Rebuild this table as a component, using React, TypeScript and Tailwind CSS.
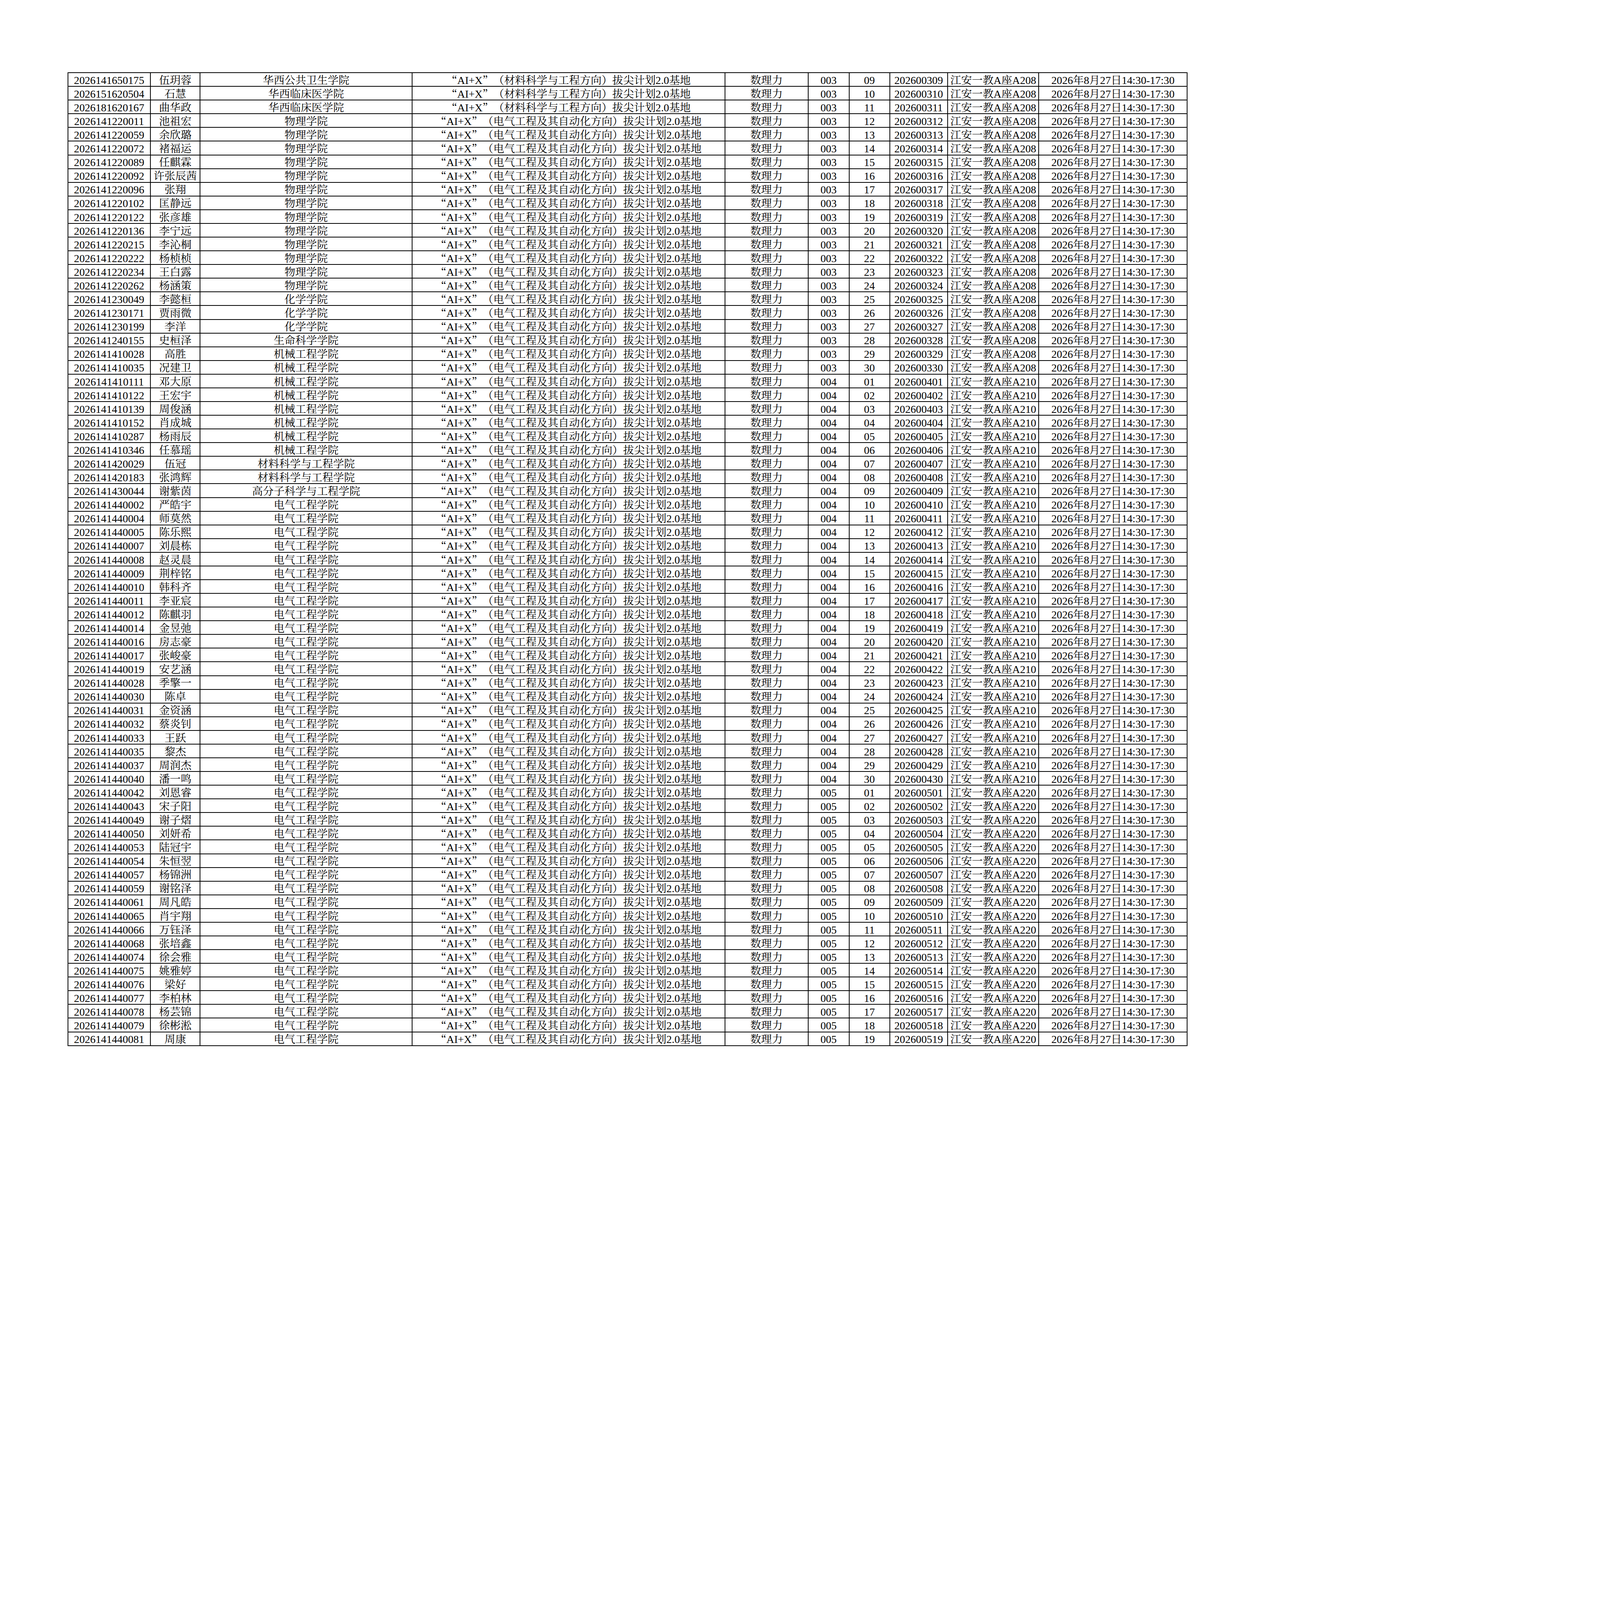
const CJK = "font-['Noto_Serif_CJK_SC','Noto_Sans_CJK_SC',serif]"

function Program({ major }: { major: string }) {
  return (
    <>
      <span className={CJK}>“</span>AI+X<span className={CJK}>”</span>（{major}方向）拔尖计划2.0基地
    </>
  )
}

const students: [string, string, string][] = [
  ['2026141650175', '伍玥蓉', '华西公共卫生学院'],
  ['2026151620504', '石慧', '华西临床医学院'],
  ['2026181620167', '曲华政', '华西临床医学院'],
  ['2026141220011', '池祖宏', '物理学院'],
  ['2026141220059', '余欣璐', '物理学院'],
  ['2026141220072', '褚福运', '物理学院'],
  ['2026141220089', '任麒霖', '物理学院'],
  ['2026141220092', '许张辰茜', '物理学院'],
  ['2026141220096', '张翔', '物理学院'],
  ['2026141220102', '匡静远', '物理学院'],
  ['2026141220122', '张彦雄', '物理学院'],
  ['2026141220136', '李宁远', '物理学院'],
  ['2026141220215', '李沁桐', '物理学院'],
  ['2026141220222', '杨桢桢', '物理学院'],
  ['2026141220234', '王白露', '物理学院'],
  ['2026141220262', '杨涵策', '物理学院'],
  ['2026141230049', '李懿桓', '化学学院'],
  ['2026141230171', '贾雨微', '化学学院'],
  ['2026141230199', '李洋', '化学学院'],
  ['2026141240155', '史桓泽', '生命科学学院'],
  ['2026141410028', '高胜', '机械工程学院'],
  ['2026141410035', '况建卫', '机械工程学院'],
  ['2026141410111', '邓大原', '机械工程学院'],
  ['2026141410122', '王宏宇', '机械工程学院'],
  ['2026141410139', '周俊涵', '机械工程学院'],
  ['2026141410152', '肖成城', '机械工程学院'],
  ['2026141410287', '杨雨辰', '机械工程学院'],
  ['2026141410346', '任慕瑶', '机械工程学院'],
  ['2026141420029', '伍冠', '材料科学与工程学院'],
  ['2026141420183', '张鸿辉', '材料科学与工程学院'],
  ['2026141430044', '谢紫茵', '高分子科学与工程学院'],
  ['2026141440002', '严皓宇', '电气工程学院'],
  ['2026141440004', '师莫然', '电气工程学院'],
  ['2026141440005', '陈乐熙', '电气工程学院'],
  ['2026141440007', '刘晨栋', '电气工程学院'],
  ['2026141440008', '赵灵晨', '电气工程学院'],
  ['2026141440009', '荆梓铭', '电气工程学院'],
  ['2026141440010', '韩科齐', '电气工程学院'],
  ['2026141440011', '李亚宸', '电气工程学院'],
  ['2026141440012', '陈麒羽', '电气工程学院'],
  ['2026141440014', '金昱弛', '电气工程学院'],
  ['2026141440016', '房志豪', '电气工程学院'],
  ['2026141440017', '张峻豪', '电气工程学院'],
  ['2026141440019', '安艺涵', '电气工程学院'],
  ['2026141440028', '季擎一', '电气工程学院'],
  ['2026141440030', '陈卓', '电气工程学院'],
  ['2026141440031', '金资涵', '电气工程学院'],
  ['2026141440032', '蔡炎钊', '电气工程学院'],
  ['2026141440033', '王跃', '电气工程学院'],
  ['2026141440035', '黎杰', '电气工程学院'],
  ['2026141440037', '周润杰', '电气工程学院'],
  ['2026141440040', '潘一鸣', '电气工程学院'],
  ['2026141440042', '刘恩睿', '电气工程学院'],
  ['2026141440043', '宋子阳', '电气工程学院'],
  ['2026141440049', '谢子熠', '电气工程学院'],
  ['2026141440050', '刘妍希', '电气工程学院'],
  ['2026141440053', '陆冠宇', '电气工程学院'],
  ['2026141440054', '朱恒翌', '电气工程学院'],
  ['2026141440057', '杨锦洲', '电气工程学院'],
  ['2026141440059', '谢铭泽', '电气工程学院'],
  ['2026141440061', '周凡皓', '电气工程学院'],
  ['2026141440065', '肖宇翔', '电气工程学院'],
  ['2026141440066', '万钰泽', '电气工程学院'],
  ['2026141440068', '张培鑫', '电气工程学院'],
  ['2026141440074', '徐会雅', '电气工程学院'],
  ['2026141440075', '姚雅婷', '电气工程学院'],
  ['2026141440076', '梁好', '电气工程学院'],
  ['2026141440077', '李柏林', '电气工程学院'],
  ['2026141440078', '杨芸锦', '电气工程学院'],
  ['2026141440079', '徐彬淞', '电气工程学院'],
  ['2026141440081', '周康', '电气工程学院'],
]

// exam room groups: 003 starts at seat 09, 004 and 005 start at 01
function seating(i: number) {
  if (i < 22) return { group: '003', seat: i + 9, room: 'A208' }
  if (i < 52) return { group: '004', seat: i - 21, room: 'A210' }
  return { group: '005', seat: i - 51, room: 'A220' }
}

const pad2 = (n: number) => String(n).padStart(2, '0')

function Cell({ children }: { children: React.ReactNode }) {
  return (
    <div className="flex items-center justify-center whitespace-nowrap border-r-2 border-black pt-[4px]">
      {children}
    </div>
  )
}

export default function App() {
  return (
    <div className="bg-white pb-[200px] pl-[172.5px] pt-[185.1px] font-['Liberation_Serif','Noto_Serif_CJK_SC','Noto_Sans_CJK_SC',serif] text-[27.7px] leading-none text-black">
      <div className="w-max border-l-2 border-t-2 border-black">
        {students.map(([id, name, college], i) => {
          const s = seating(i)
          return (
            <div
              key={id}
              className="grid h-[35.09px] grid-cols-[211.6px_127.1px_543.1px_800.5px_212.8px_105.2px_103.8px_148.4px_233.5px_379.3px] border-b-2 border-black"
            >
              <Cell>{id}</Cell>
              <Cell>{name}</Cell>
              <Cell>{college}</Cell>
              <Cell>
                <Program major={i < 3 ? '材料科学与工程' : '电气工程及其自动化'} />
              </Cell>
              <Cell>数理力</Cell>
              <Cell>{s.group}</Cell>
              <Cell>{pad2(s.seat)}</Cell>
              <Cell>{`2026${s.group}${pad2(s.seat)}`}</Cell>
              <Cell>{`江安一教A座${s.room}`}</Cell>
              <Cell>2026年8月27日14:30-17:30</Cell>
            </div>
          )
        })}
      </div>
    </div>
  )
}
